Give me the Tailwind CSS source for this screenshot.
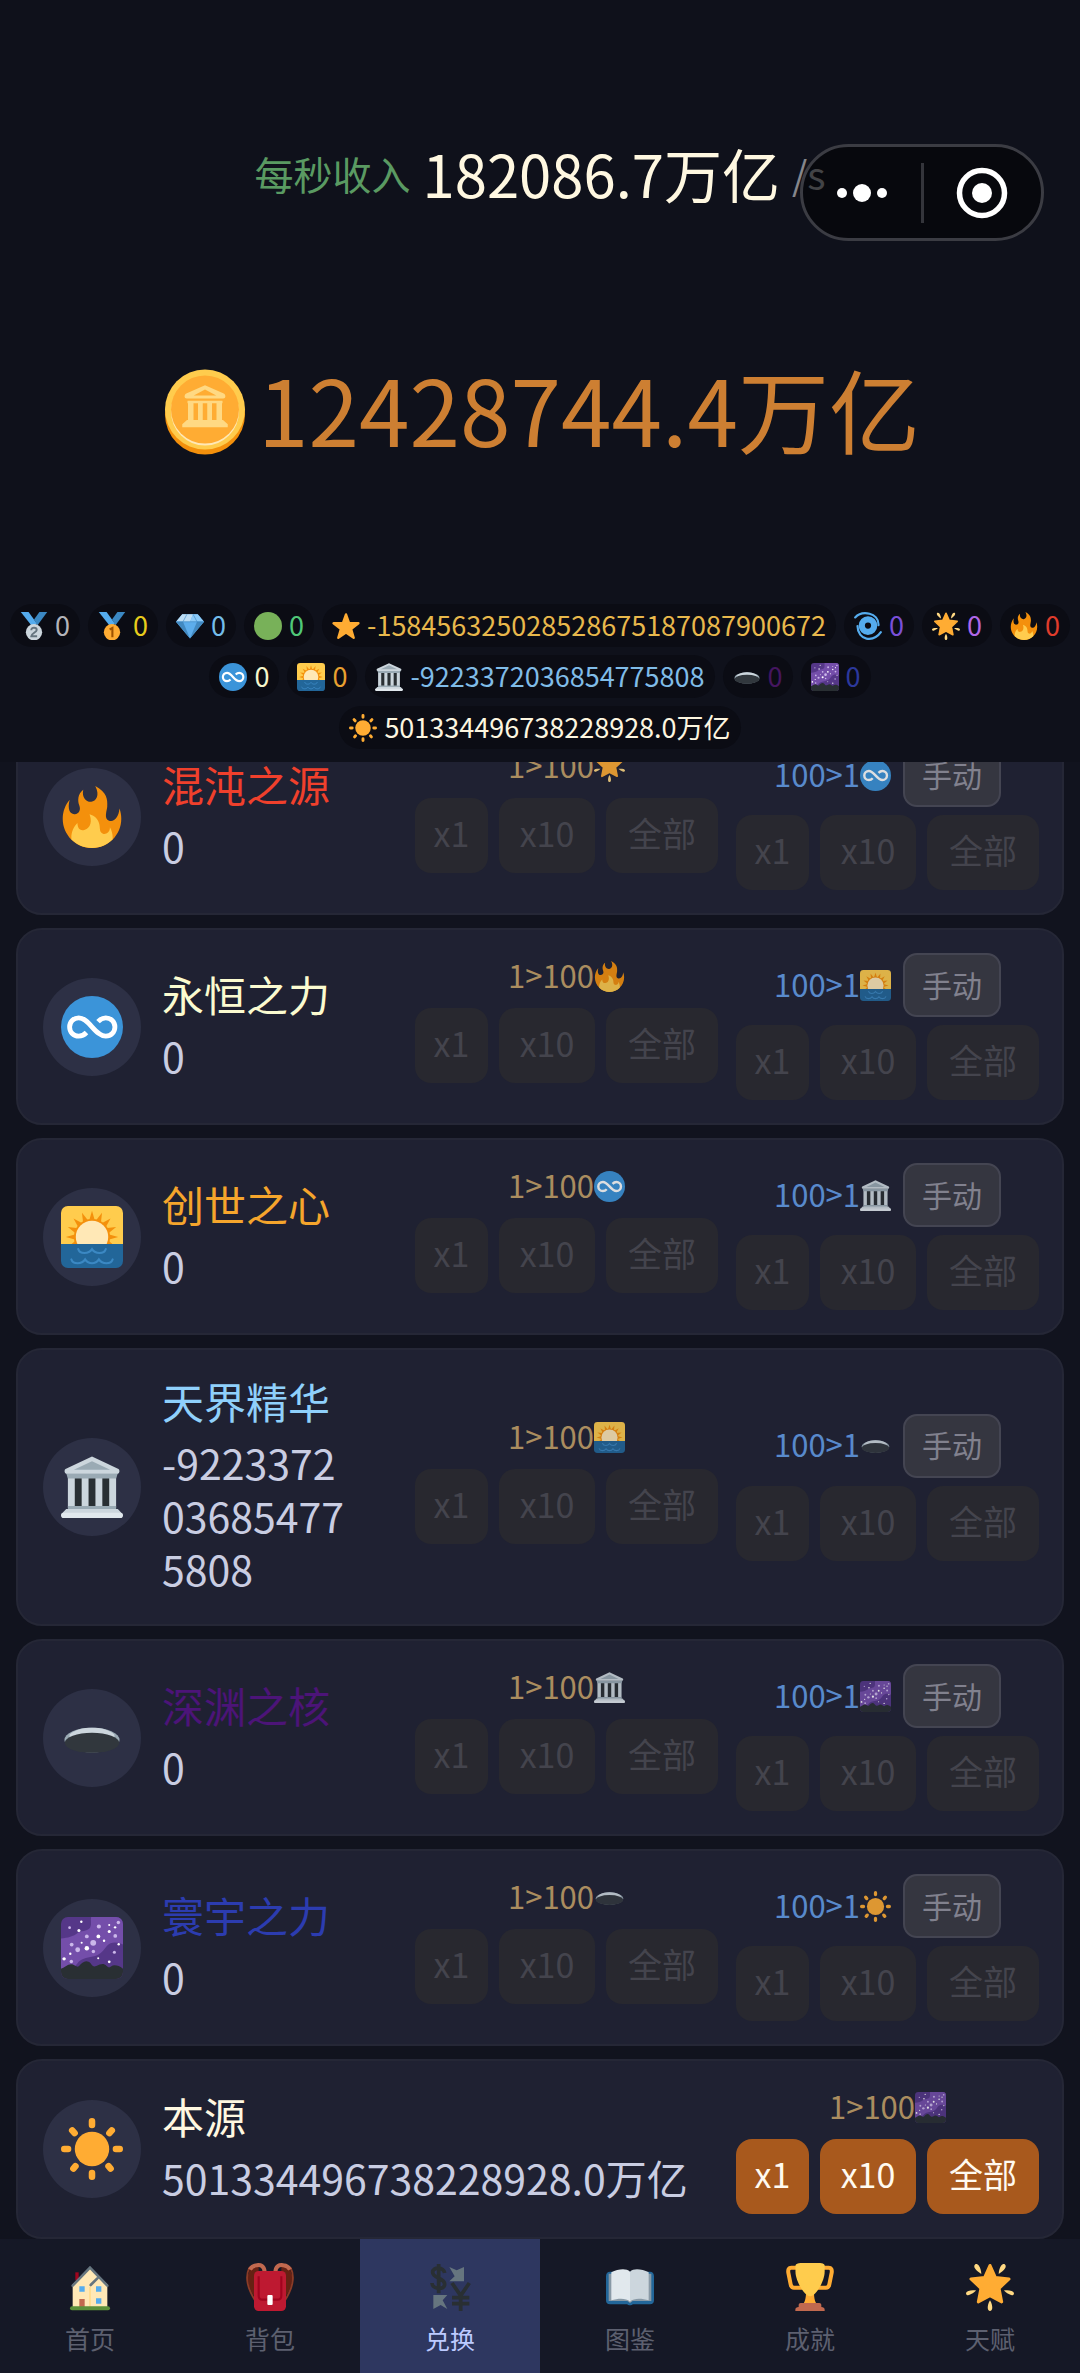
<!DOCTYPE html>
<html lang="zh-CN">
<head>
  <meta charset="UTF-8">
  <meta name="viewport" content="width=device-width, initial-scale=1">
  <title>兑换</title>
  <script src="https://cdn.jsdelivr.net/npm/@tailwindcss/browser@4"></script>
</head>
<body class="h-screen flex flex-col overflow-hidden bg-[#11131e] font-['Noto_Sans_CJK_SC',sans-serif] text-white">

  <!-- icon sprite, every symbol is on a 36 unit grid -->
  <svg class="hidden" aria-hidden="true">
    <symbol id="fire" viewBox="0 0 36 36">
      <path fill="#F4900C" d="M35 19c0-2.062-.367-4.039-1.04-5.868-.46 5.389-3.333 8.157-6.335 6.868-2.812-1.208-.917-5.917-.777-8.164.236-3.809-.012-8.169-6.931-11.794 2.875 5.5.333 8.917-2.333 9.125-2.958.231-5.667-2.542-4.667-7.042-3.238 2.386-3.332 6.402-2.333 9 1.042 2.708-.042 4.958-2.583 5.208-2.84.28-4.418-3.041-2.963-8.333C2.52 10.965 1 14.805 1 19c0 9.389 7.611 17 17 17s17-7.611 17-17z"/>
      <path fill="#FFCC4D" d="M28.394 23.999c.148 3.084-2.561 4.293-4.019 3.709-2.106-.843-1.541-2.291-2.083-5.291s-2.625-5.083-5.708-6c2.25 6.333-1.247 8.667-3.08 9.084-1.872.426-3.753-.001-3.968-4.007C7.352 23.668 6 26.676 6 30c0 .368.023.73.055 1.09C9.125 34.124 13.342 36 18 36s8.875-1.876 11.945-4.91c.032-.36.055-.722.055-1.09 0-2.187-.584-4.236-1.606-6.001z"/>
    </symbol>
    <symbol id="infinity" viewBox="0 0 36 36">
      <circle cx="18" cy="18" r="18" fill="#3B94D9"/>
      <path fill="none" stroke="#fff" stroke-width="2.8" d="M14.8 21.2C13.5 22.6 12 23.3 10.3 23.3 7.2 23.3 5 21 5 18S7.2 12.7 10.3 12.7C16.5 12.7 19.5 23.3 26 23.3 29 23.3 31.3 21 31.3 18S29 12.7 26 12.7C24 12.7 22.6 13.7 21.5 14.9"/>
    </symbol>
    <symbol id="sunrise" viewBox="0 0 36 36">
      <path fill="#FFCC4D" d="M36 22V4a4 4 0 0 0-4-4H4a4 4 0 0 0-4 4v18z"/>
      <g fill="#F4900C">
        <circle cx="18" cy="18" r="10.5"/>
        <path id="ray" d="M16.2 9L18 2.8 19.8 9z"/>
        <use href="#ray" transform="rotate(22.5 18 18)"/>
        <use href="#ray" transform="rotate(45 18 18)"/>
        <use href="#ray" transform="rotate(67.5 18 18)"/>
        <use href="#ray" transform="rotate(90 18 18)"/>
        <use href="#ray" transform="rotate(112.5 18 18)"/>
        <use href="#ray" transform="rotate(-22.5 18 18)"/>
        <use href="#ray" transform="rotate(-45 18 18)"/>
        <use href="#ray" transform="rotate(-67.5 18 18)"/>
        <use href="#ray" transform="rotate(-90 18 18)"/>
        <use href="#ray" transform="rotate(-112.5 18 18)"/>
      </g>
      <circle cx="18" cy="18" r="9.4" fill="#FFE8B6"/>
      <path fill="#269" d="M0 22v10a4 4 0 0 0 4 4h28a4 4 0 0 0 4-4V22z"/>
      <path fill="none" stroke="#3B88C3" stroke-width="1.2" stroke-linecap="round" d="M10 25c1 3 6 3 8 0 2 3 7 3 8 0M6 31c1 3 6 3 8 0 2 3 6 3 8 0 2 3 7 3 8 0"/>
    </symbol>
    <symbol id="temple" viewBox="0 0 36 36">
      <path fill="#292F33" d="M6 12h24v18H6z"/>
      <path fill="#CCD6DD" d="M4 11h4v19H4zM12 11h4v19h-4zM20 11h4v19h-4zM28 11h4v19h-4z"/>
      <path fill="#9AAAB4" d="M3 10h30l-1 3H4zM4 29h28v3H4z"/>
      <path fill="#CCD6DD" d="M18 .3L2.600 7.500C1.800 8 1.800 10.300 3.500 10.300h29C34.200 10.300 34.200 8 33.400 7.500z"/>
      <path fill="#9AAAB4" d="M18 3L7.500 8h21z"/>
      <path fill="#CCD6DD" d="M3 30.800h30l3 3.200H0z"/>
      <path fill="#E1E8ED" d="M1.500 33h33c1 0 1.500.6 1.500 1.500S35.500 36 34.500 36h-33C.5 36 0 35.400 0 34.500S.5 33 1.500 33z"/>
    </symbol>
    <symbol id="hole" viewBox="0 0 36 36">
      <ellipse cx="18" cy="19.200" rx="16" ry="7.200" fill="#9AAAB4"/>
      <path fill="#CCD6DD" d="M5 16C8 13 13 12 18 12s10 1 13 4v3H5z"/>
      <ellipse cx="18" cy="20.800" rx="15.800" ry="5.800" fill="#31373D"/>
    </symbol>
    <symbol id="galaxy" viewBox="0 0 36 36">
      <rect width="36" height="36" rx="4" fill="#553788"/>
      <path fill="#744EAA" d="M17.500 0H32a4 4 0 0 1 4 4v12c-3-1.500-7-2-9.500 1-3 4-4 5-8 6s-7 1-9 4-5 4-9.500 3V12.500c4-.5 7-1 10-3.500 3-1 6-1 7-3s0-4 .5-6z"/>
      <path fill="#292F33" d="M0 30c2-.5 4-3 6.500-2.500 2 .5 2.500 2 4 1 1.500-2 3.500-3.500 5.500-2.500s2 3.500 4.500 2.500 4-2 6 0 2.500-.5 4.500-.5 3 .5 5 2v2a4 4 0 0 1-4 4H4a4 4 0 0 1-4-4z"/>
      <g fill="#CBB7EA">
        <circle cx="18.700" cy="15" r="1.700"/><circle cx="9.700" cy="19" r="1.400"/><circle cx="6.200" cy="16" r="1.100"/><circle cx="15" cy="11.300" r="1.100"/>
        <circle cx="22" cy="5.500" r="1.200"/><circle cx="31.500" cy="11" r="1.100"/><circle cx="18.800" cy="20" r="1"/><circle cx="6" cy="25.800" r="1"/>
        <circle cx="33.300" cy="3.200" r="1"/><circle cx="31" cy="20.500" r=".9"/><circle cx="5" cy="6.200" r=".8"/>
      </g>
      <g fill="#fff">
        <circle cx="15" cy="18.200" r="1.300"/><circle cx="21.700" cy="11.300" r="1.100"/><circle cx="1.800" cy="24.300" r="1"/><circle cx="10.400" cy="7.800" r=".9"/>
        <circle cx="28" cy="8.400" r=".9"/><circle cx="31.400" cy="6" r=".7"/><circle cx="25" cy="13.800" r=".7"/><circle cx="11.800" cy="2.800" r=".7"/>
        <circle cx="28" cy="4.600" r=".6"/><circle cx="33.500" cy="15.800" r=".7"/><circle cx="21.600" cy="24" r=".6"/><circle cx="28" cy="26" r=".8"/>
        <circle cx="5.400" cy="21.300" r=".7"/><circle cx="12" cy="15" r=".6"/>
      </g>
    </symbol>
    <symbol id="sun" viewBox="0 0 36 36">
      <g fill="none" stroke="#FFAC33" stroke-width="3.800" stroke-linecap="round">
        <path d="M18 1.900v2.200M18 31.900v2.200M1.900 18h2.200M31.900 18h2.200M6.500 7.200l1.400 1.600M29.500 7.200l-1.400 1.600M7.200 29.400l1.200-1.400M28.800 29.400l-1.200-1.400"/>
      </g>
      <circle cx="18" cy="18" r="10" fill="#FFAC33"/>
    </symbol>
    <symbol id="star" viewBox="0 0 36 36">
      <path fill="#FFAC33" stroke="#FFAC33" stroke-width="3" stroke-linejoin="round" d="M18 3l4 11.200 12 .3-9.500 7.300 3.400 11.400L18 26.500l-9.900 6.700 3.400-11.400L2 14.500l12-.3z"/>
    </symbol>
    <symbol id="glow" viewBox="0 0 36 36">
      <path fill="#FFAC33" stroke="#FFAC33" stroke-width="2.200" stroke-linejoin="round" d="M18 1.800l4 9 10.300 1.200-7.500 7 2 10.200L18 24.500l-8.800 4.700 2-10.200-7.500-7L14 10.800z"/>
      <g fill="#FFD983">
        <path d="M18 28c1.300 2 1.700 4 1.700 5.600 0 1.400-.7 2.400-1.700 2.400s-1.700-1-1.700-2.400c0-1.600.4-3.600 1.700-5.600z"/>
        <path d="M7.600 20.700c-1.800 1.700-3.300 2.600-4.900 3.200-1.300.5-2.400.1-2.600-.7-.3-.9.400-1.800 1.700-2.200 1.500-.5 3.600-.7 5.800-.3z"/>
        <path d="M28.400 20.700c1.800 1.700 3.300 2.600 4.900 3.200 1.300.5 2.400.1 2.600-.7.3-.9-.4-1.800-1.700-2.200-1.500-.5-3.600-.7-5.800-.3z"/>
        <path d="M11.500 8.200C9.200 7 7.800 5.600 6.800 4.200 6 3 6 1.700 6.800 1.100c.9-.6 2.100-.1 2.900 1 .9 1.400 1.700 3.600 1.800 6.100z"/>
        <path d="M24.500 8.200c2.300-1.200 3.700-2.600 4.700-4 .8-1.200.8-2.500 0-3.100-.9-.6-2.100-.1-2.900 1-.9 1.400-1.700 3.600-1.800 6.100z"/>
      </g>
    </symbol>
    <symbol id="silver" viewBox="0 0 36 36">
      <path fill="#55ACEE" d="M1 0h10l11 15-6 4z"/>
      <path fill="#3B88C3" d="M35 0H25l-7 9.500 4.500 7.500z"/>
      <circle cx="18" cy="26" r="10.500" fill="#CCD6DD"/>
      <path fill="none" stroke="#66757F" stroke-width="2.500" d="M14.500 23.500c0-4.500 7-4 7-.3 0 3-7 4.300-7 8h7.500"/>
    </symbol>
    <symbol id="gold" viewBox="0 0 36 36">
      <path fill="#55ACEE" d="M1 0h10l11 15-6 4z"/>
      <path fill="#3B88C3" d="M35 0H25l-7 9.500 4.500 7.500z"/>
      <circle cx="18" cy="26" r="10.500" fill="#FFAC33"/>
      <path fill="none" stroke="#9E5200" stroke-width="2.700" d="M15 22.500l3.500-2v12"/>
    </symbol>
    <symbol id="gem" viewBox="0 0 36 36">
      <path fill="#5DADEC" d="M8 3h20l8 9.500L18 34 0 12.500z"/>
      <path fill="#BDDDF4" d="M8 3h6l-5 9.500H0zM14 3h8l-4 9.500-9 0z"/>
      <path fill="#8CCAF7" d="M18 12.500L22 3h6l8 9.500z"/>
      <path fill="#4289C1" d="M0 12.500h9L18 34zM27 12.500h9L18 34z"/>
      <path fill="none" stroke="#3B88C3" stroke-width=".8" d="M0 12.500h36M9 12.500l5-9.500M27 12.500L22 3"/>
    </symbol>
    <symbol id="green" viewBox="0 0 36 36">
      <circle cx="18" cy="18" r="18" fill="#78B159"/>
    </symbol>
    <symbol id="cyclone" viewBox="0 0 36 36">
      <g fill="none" stroke="#55ACEE" stroke-linecap="round">
        <circle cx="18" cy="17.500" r="8" stroke-width="8"/>
        <path stroke-width="2.800" d="M1.500 7C7 1 14 .8 20 2.200S32 8.500 31.500 17M34.500 26C29 34 22 35.200 16 34.200S4.500 27 4.500 18"/>
      </g>
    </symbol>
    <symbol id="coin" viewBox="0 0 36 36">
      <circle cx="18" cy="19" r="16" fill="#F4900C"/>
      <circle cx="18" cy="17" r="16" fill="#FFCC4D"/>
      <circle cx="18" cy="17.800" r="13.600" fill="#FFE8B6"/>
      <circle cx="18" cy="17" r="13.600" fill="#FFAC33"/>
      <path fill="#FFD983" d="M18 7.300l7.500 3.300c.9.500.9 2-.2 2H10.700c-1.100 0-1.100-1.500-.2-2zM11 13.500h14v1H11zM11.200 14h2.200v7.200h-2.200zM15.200 14h1.900v7.200h-1.900zM18.900 14h1.900v7.200h-1.900zM22.600 14h2.200v7.200h-2.200zM10.800 21.200h14.400l1.900 1.700v1.200H8.900v-1.200z"/>
      <path fill="#FFAC33" d="M18 9l-4.500 2.400h9z"/>
    </symbol>
    <symbol id="house" viewBox="0 0 36 36">
      <path fill="#A0041E" d="M7 7h2.500v6H7z"/>
      <path fill="#FFE8B6" d="M5 16L18 4l13 12v17H5z"/>
      <path fill="#FFD983" d="M17.500 18h1v15h-1z"/>
      <path fill="none" stroke="#66757F" stroke-width="2" stroke-linecap="round" d="M5 17L18 3.500 31 17M18.500 16.500l5-5"/>
      <path fill="#55ACEE" d="M10 17.500h4v4h-4zM22.500 17.500h4v4h-4zM22.500 26.500h4v4h-4z"/>
      <path fill="#C1694F" d="M10 27h4v6h-4z"/>
      <rect x="3" y="32.500" width="30" height="3" rx="1.500" fill="#5C913B"/>
    </symbol>
    <symbol id="backpack" viewBox="0 0 36 36">
      <path fill="#662113" d="M3.500 3h6v26C4 23 1 17 1.500 9zM32.500 3h-6v26c5.500-6 8.500-12 8-20z"/>
      <path fill="none" stroke="#8A3B26" stroke-width="1.400" d="M2.500 3.500C.8 7 .5 10 1 13.500c.5 6 3 10 6 15M33.500 3.500c1.700 3.500 2 6.500 1.500 10-.5 6-3 10-6 15"/>
      <path fill="none" stroke="#C1694F" stroke-width="3" d="M14 6.500C13.500 2 11 1.200 8 1.700 5.500 2 4 3 3 5M22 6.500c.5-4.500 3-5.300 6-4.800 2.500.3 4 1.300 5 3.300"/>
      <rect x="6" y="6" width="24" height="30" rx="3.500" fill="#BE1931"/>
      <path fill="none" stroke="#A0041E" stroke-width="1.600" d="M9.500 10v14.500c0 2 1 3 3 3h11c2 0 3-1 3-3V10"/>
      <rect x="16" y="24" width="4" height="7.500" rx=".8" fill="#fff"/>
    </symbol>
    <symbol id="exchange" viewBox="0 0 36 36">
      <path fill="none" stroke="#292F33" stroke-width="2.800" d="M14 7.500C13.500 3 5 2.500 5 7c0 5 9 3.500 9 9C14 20.500 4.800 20 4.500 15M9.500.7v22M19.500 15l6.500 9.500L32.500 15M26 24v12.500M19.500 26h13M19.500 30.500h13"/>
      <path fill="#66757F" d="M17.500 3l5.500 2.500 5.500-2.500v10.700h-11L21.500 10zM5.500 24H16l-3.500 4 3.500 6.500-5-3-5.500 3z"/>
    </symbol>
    <symbol id="book" viewBox="0 0 36 36">
      <path fill="#269" d="M0 10c0-2 1-3.500 3-3.500h30c2 0 3 1.500 3 3.500v18c0 2-1 3-3 3H20c-.5 1-3.500 1-4 0H3c-2 0-3-1-3-3z"/>
      <path fill="#8899A6" d="M2 8h32v20.500H20L18 30l-2-1.500H2z"/>
      <path fill="#E1E8ED" d="M4 7c5-2.500 11-3.500 14-.5V29c-3-3-9-2.500-14-1z"/>
      <path fill="#CCD6DD" d="M32 7c-5-2.500-11-3.500-14-.5V29c3-3 9-2.500 14-1z"/>
    </symbol>
    <symbol id="trophy" viewBox="0 0 36 36">
      <path fill="none" stroke="#FFAC33" stroke-width="3" d="M9 3.500H4C2 3.500 1.500 5 1.700 7L3.500 16c.3 1.700 1.200 2.500 2.500 2.500h6M27 3.500h5c2 0 2.500 1.500 2.300 3.500l-1.800 9c-.3 1.700-1.200 2.500-2.500 2.500h-6"/>
      <path fill="#FFAC33" d="M15 22h6c0 5 1 8 3 10H12c2-2 3-5 3-10z"/>
      <path fill="#FFCC4D" d="M7.100 2C7.100.6 9 0 11 0h14c2 0 4 .6 4 2v4.600C29 13.400 22.400 25 18.100 25S7.100 13.400 7.100 6.600z"/>
      <path fill="#C1694F" d="M11 30h14c.8 0 1.500.7 1.500 1.500V33c1.500 0 2.500.8 2.500 2v1H7v-1c0-1.200 1-2 2.500-2v-1.500c0-.8.700-1.500 1.500-1.500z"/>
    </symbol>
  </svg>

  <header class="bg-[#0f111b] pt-[137px] pb-[13px] flex flex-col items-center shrink-0">
    <div class="h-[72px] flex items-center gap-3">
      <span class="text-[39px] leading-none text-[#5a9a62]">每秒收入</span>
      <span class="text-[58px] leading-none text-[#fff8e1]">182086.7万亿</span>
      <span class="text-[39px] leading-none text-[#85868c]">/s</span>
    </div>
    <div class="mt-[158px] h-[90px] flex items-start gap-2">
      <svg class="size-[90px]"><use href="#coin"/></svg>
      <span class="text-[91px] leading-[80px] text-[#cd7f32]">12428744.4万亿</span>
    </div>
    <div id="badges" class="mt-[147px] flex flex-col items-center gap-2"></div>
  </header>

  <!-- mini program capsule floats over the page -->
  <div class="absolute top-[144px] right-[36px] w-[244px] h-[97px] rounded-full border-3 border-[#3b3c43] bg-black/50 flex items-center">
    <button class="flex-1 h-full flex items-center justify-center" aria-label="更多">
      <svg class="w-[52px] h-[20px]" viewBox="0 0 52 20" fill="#fff"><circle cx="6" cy="10" r="5"/><circle cx="26" cy="10" r="9"/><circle cx="46" cy="10" r="5"/></svg>
    </button>
    <span class="w-[3px] h-[60px] bg-[#34353b]"></span>
    <button class="flex-1 h-full flex items-center justify-center" aria-label="关闭">
      <svg class="size-[52px]" viewBox="0 0 52 52"><circle cx="26" cy="26" r="22.500" fill="none" stroke="#fff" stroke-width="5.500"/><circle cx="26" cy="26" r="10" fill="#fff"/></svg>
    </button>
  </div>

  <!-- col-reverse makes the list open scrolled to its last card -->
  <main class="flex-1 min-h-0 overflow-y-auto [scrollbar-width:none] px-4 flex flex-col-reverse">
    <div id="list" class="flex flex-col gap-[13px]"></div>
  </main>

  <nav id="nav" class="h-[134px] shrink-0 grid grid-cols-6 bg-[#151826]"></nav>

  <script>
    const badgeRows = [
      [
        ["silver", "0", "text-[#b4b4ba]"],
        ["gold", "0", "text-[#e8cc1c]"],
        ["gem", "0", "text-[#74bdea]"],
        ["green", "0", "text-[#50c878]"],
        ["star", "-158456325028528675187087900672", "text-[#e8b84c]"],
        ["cyclone", "0", "text-[#7a50d8]"],
        ["glow", "0", "text-[#b067e8]"],
        ["fire", "0", "text-[#e03c2c]"]
      ],
      [
        ["infinity", "0", "text-[#f6f6cc]"],
        ["sunrise", "0", "text-[#e8a030]"],
        ["temple", "-9223372036854775808", "text-[#80bce8]"],
        ["hole", "0", "text-[#451660]"],
        ["galaxy", "0", "text-[#2c389c]"]
      ],
      [
        ["sun", "501334496738228928.0万亿", "text-[#fdf6e0]"]
      ]
    ];

    const items = [
      { icon: "fire", name: "混沌之源", color: "text-[#f0402c]", count: "0", down: "glow", up: "infinity" },
      { icon: "infinity", name: "永恒之力", color: "text-[#fbfbd0]", count: "0", down: "fire", up: "sunrise" },
      { icon: "sunrise", name: "创世之心", color: "text-[#f5a52c]", count: "0", down: "infinity", up: "temple" },
      { icon: "temple", name: "天界精华", color: "text-[#8fd0fb]", count: "-9223372036854775808", down: "sunrise", up: "hole" },
      { icon: "hole", name: "深渊之核", color: "text-[#4c1478]", count: "0", down: "temple", up: "galaxy" },
      { icon: "galaxy", name: "寰宇之力", color: "text-[#2c3cb0]", count: "0", down: "hole", up: "sun" },
      { icon: "sun", name: "本源", color: "text-[#fff8e1]", count: "501334496738228928.0万亿", down: "galaxy", active: true }
    ];

    const tabs = [
      ["house", "首页"], ["backpack", "背包"], ["exchange", "兑换"],
      ["book", "图鉴"], ["trophy", "成就"], ["glow", "天赋"]
    ];

    function buttons(active) {
      const look = active ? "bg-[#a8591d] text-[#fffaf0]" : "bg-[#28282f] text-[#44444d]";
      const off = active ? "" : "disabled";
      return `
        <div class="flex gap-[11px] text-[34px] leading-none">
          <button ${off} class="w-[73px] h-[75px] pb-[5px] rounded-2xl ${look}">x1</button>
          <button ${off} class="w-[96px] h-[75px] pb-[5px] rounded-2xl ${look}">x10</button>
          <button ${off} class="w-[112px] h-[75px] pb-[5px] rounded-2xl ${look}">全部</button>
        </div>`;
    }

    document.getElementById("badges").innerHTML = badgeRows.map(row => `
      <div class="flex gap-2">
        ${row.map(([icon, value, color]) => `
        <div class="h-[43px] px-[10px] rounded-full bg-[#0b0c14] flex items-center gap-[7px]">
          <svg class="size-7"><use href="#${icon}"/></svg>
          <span class="pb-[2px] text-[27px] leading-none ${color}">${value}</span>
        </div>`).join("")}
      </div>`).join("");

    document.getElementById("list").innerHTML = items.map(item => `
      <section class="shrink-0 flex items-center rounded-[26px] border-2 border-[#252736] bg-[#1f2132] pl-[25px] pr-[23px] py-[23px]">
        <div class="size-[98px] shrink-0 rounded-full bg-[#2d3045] flex items-center justify-center">
          <svg class="size-[62px]"><use href="#${item.icon}"/></svg>
        </div>
        <div class="flex-1 min-w-0 ml-[21px] pb-[6px] ${item.active ? "" : "pr-[60px]"}">
          <h2 class="text-[42px] leading-[55px] ${item.color}">${item.name}</h2>
          <p class="mt-2 text-[41px] leading-[53px] break-all text-[#c9cde2]">${item.count}</p>
        </div>
        <div class="flex items-start gap-[18px]">
          <div class="flex flex-col items-center gap-2">
            <div class="h-[47px] flex items-center">
              <div class="flex items-start opacity-85">
                <span class="text-[31px] leading-[27px] text-[#c3a068]">1&gt;100</span>
                <svg class="size-[31px]"><use href="#${item.down}"/></svg>
              </div>
            </div>
            ${buttons(item.active)}
          </div>
          ${item.up ? `
          <div class="flex flex-col items-center gap-2">
            <div class="h-16 flex items-center">
              <div class="flex items-start opacity-85">
                <span class="text-[31px] leading-[27px] text-[#639de6]">100&gt;1</span>
                <svg class="size-[31px]"><use href="#${item.up}"/></svg>
              </div>
              <button class="ml-3 w-[98px] h-16 pb-[3px] rounded-[14px] border-2 border-[#444552] bg-[#353640] text-[30px] leading-none text-[#81818e]">手动</button>
            </div>
            ${buttons(false)}
          </div>` : ""}
        </div>
      </section>`).join("");

    document.getElementById("nav").innerHTML = tabs.map(([icon, label]) => `
      <a href="#" class="flex flex-col items-center pt-6 ${label === "兑换" ? "bg-[#2e3760] text-[#bccaff]" : "text-[#5d6070]"}">
        <svg class="size-12"><use href="#${icon}"/></svg>
        <span class="mt-[9px] text-[25px] leading-[36px]">${label}</span>
      </a>`).join("");
  </script>
</body>
</html>
